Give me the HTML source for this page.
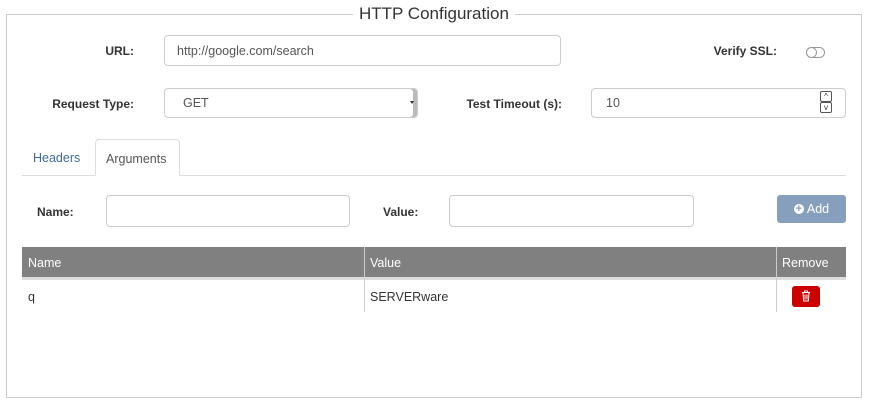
<!DOCTYPE html>
<html><head><style>
*{box-sizing:border-box;margin:0;padding:0}
body{width:869px;height:410px;background:#fff;font-family:"Liberation Sans",sans-serif;font-size:12.5px;color:#333;position:relative;overflow:hidden}
.a{position:absolute}
.fs{left:6px;top:14px;width:856px;height:384px;border:1px solid #ccc}
.lg{left:353px;top:4px;padding:0 6px;background:#fff;font-size:17px;color:#333}
.lb{font-weight:bold;font-size:12px;text-align:right}
.in{border:1px solid #ccc;border-radius:4px;background:#fff;padding-left:12px;display:flex;align-items:center;color:#555}
</style></head><body>
<div class="a fs"></div>
<div class="a lg">HTTP Configuration</div>

<div class="a lb" style="left:40px;width:94px;top:44px">URL:</div>
<div class="a in" style="left:164px;top:35px;width:397px;height:31px">http://google.com/search</div>
<div class="a lb" style="left:660px;width:117px;top:44px">Verify SSL:</div>
<div class="a" style="left:806px;top:47px;width:19px;height:11px;border:1px solid #999;border-radius:6px"></div>
<div class="a" style="left:806px;top:47px;width:11px;height:11px;border:1px solid #999;border-radius:50%;background:#fff"></div>

<div class="a lb" style="left:20px;width:114px;top:97px">Request Type:</div>
<div class="a in" style="left:164px;top:88px;width:254px;height:30px;padding-left:18px;box-shadow:inset -4px 0 0 #bbb">GET</div>
<div class="a" style="left:410px;top:101px;border-left:2px solid transparent;border-right:2px solid transparent;border-top:3px solid #333"></div>
<div class="a lb" style="left:440px;width:122px;top:97px">Test Timeout (s):</div>
<div class="a in" style="left:591px;top:88px;width:255px;height:30px;padding-left:14px">10</div>
<div class="a" style="left:820px;top:91px;width:12px;height:11px;border:1px solid #555;border-radius:2px;font-size:8px;line-height:10px;text-align:center">^</div>
<div class="a" style="left:820px;top:102px;width:12px;height:11px;border:1px solid #555;border-radius:2px;font-size:8px;line-height:9px;text-align:center">v</div>

<div class="a" style="left:22px;top:175px;width:824px;height:1px;background:#ddd"></div>
<div class="a" style="left:33px;top:151px;color:#3f6a99">Headers</div>
<div class="a" style="left:95px;top:139px;width:85px;height:37px;border:1px solid #ddd;border-bottom:1px solid #fff;border-radius:4px 4px 0 0;background:#fff;padding:12px 0 0 10px;color:#555">Arguments</div>

<div class="a lb" style="left:37px;top:205px;text-align:left">Name:</div>
<div class="a in" style="left:106px;top:195px;width:244px;height:32px"></div>
<div class="a lb" style="left:383px;top:205px;text-align:left">Value:</div>
<div class="a in" style="left:449px;top:195px;width:245px;height:32px"></div>
<div class="a" style="left:777px;top:195px;width:69px;height:28px;background:#869fbd;border-radius:3px;color:#fff;display:flex;align-items:center;justify-content:center;font-size:12.5px"><span style="display:inline-block;width:10px;height:10px;border-radius:50%;background:#fff;color:#869fbd;font-size:11px;line-height:10px;text-align:center;font-weight:bold;margin-right:3px">+</span>Add</div>

<div class="a" style="left:22px;top:247px;width:824px;height:30px;background:#808080;color:#fff"></div>
<div class="a" style="left:22px;top:277px;width:824px;height:3px;background:#ddd"></div>
<div class="a" style="left:28px;top:256px;color:#fff">Name</div>
<div class="a" style="left:370px;top:256px;color:#fff">Value</div>
<div class="a" style="left:782px;top:256px;color:#fff">Remove</div>
<div class="a" style="left:364px;top:247px;width:1px;height:65px;background:#ccc"></div>
<div class="a" style="left:776px;top:247px;width:1px;height:65px;background:#ccc"></div>
<div class="a" style="left:28px;top:290px">q</div>
<div class="a" style="left:370px;top:290px">SERVERware</div>
<div class="a" style="left:792px;top:286px;width:28px;height:21px;background:#cc0000;border-radius:3px"></div>
<svg class="a" style="left:801px;top:290px" width="10" height="12" viewBox="0 0 10 12"><path d="M1 2.5h8M3.5 2.5V1h3v1.5M2 2.5l.6 8.5h4.8L8 2.5M4 4.5v5M6 4.5v5" stroke="#fff" stroke-width="1" fill="none"/></svg>
</body></html>
